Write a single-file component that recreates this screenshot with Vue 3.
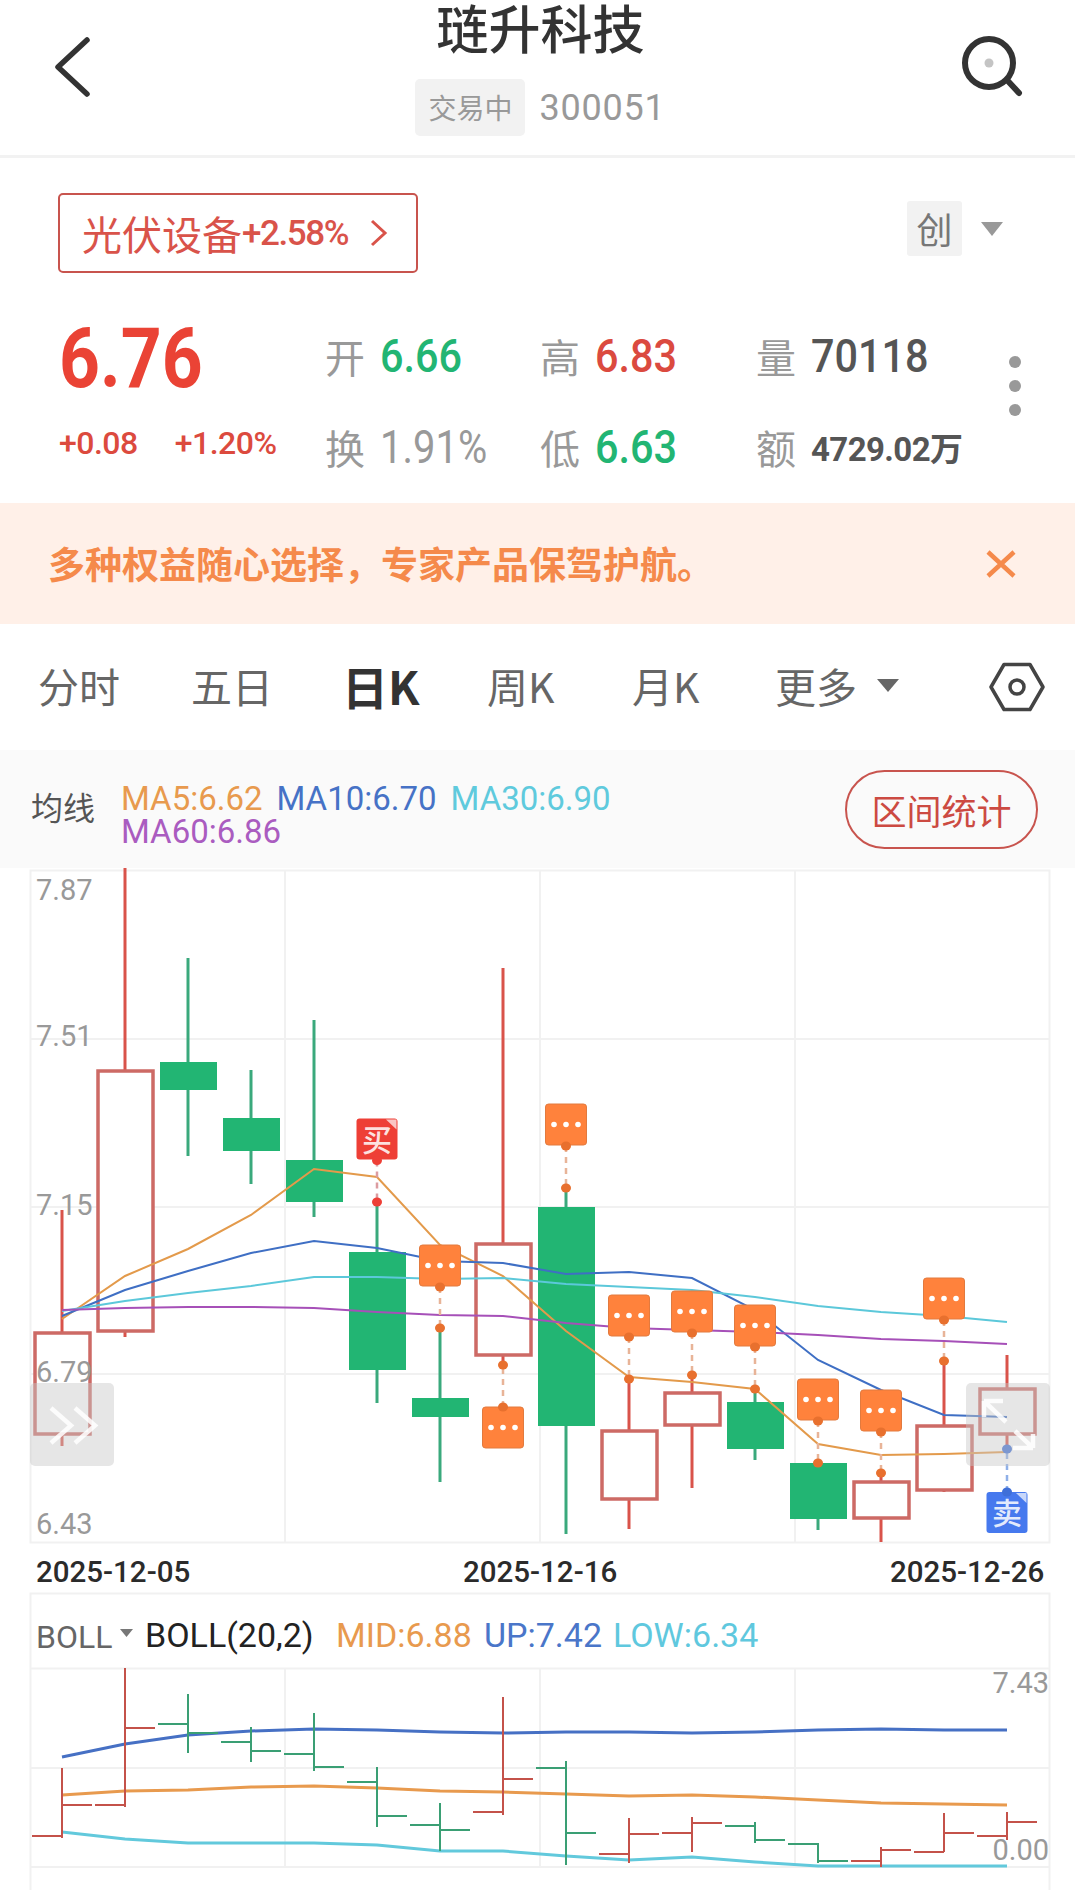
<script setup>
// Daily candles in chart pixels: wick top, body top, body bottom, wick bottom
const STEP = 63
const xAt = (i) => 62 + i * STEP
const candles = [
  ['up', 1210, 1333, 1434, 1446],
  ['up', 868, 1071, 1331, 1337],
  ['down', 958, 1063, 1089, 1156],
  ['down', 1070, 1119, 1150, 1184],
  ['down', 1020, 1161, 1201, 1217],
  ['down', 1205, 1253, 1369, 1403],
  ['down', 1330, 1399, 1416, 1482],
  ['up', 968, 1244, 1355, 1365],
  ['down', 1191, 1208, 1425, 1534],
  ['up', 1379, 1431, 1499, 1529],
  ['up', 1374, 1393, 1425, 1488],
  ['down', 1389, 1403, 1448, 1460],
  ['down', 1463, 1464, 1518, 1530],
  ['up', 1473, 1482, 1518, 1542],
  ['up', 1361, 1426, 1490, 1492],
  ['up', 1355, 1389, 1434, 1448],
].map(([dir, high, top, bottom, low], i) => ({ dir, high, top, bottom, low, x: xAt(i) }))

const toPoints = (ys) => ys.map((y, i) => `${xAt(i)},${y}`).join(' ')

const maLines = [
  { color: '#e39a4b', points: toPoints([1319, 1276, 1249, 1215, 1169, 1177, 1245, 1276, 1331, 1377, 1382, 1389, 1444, 1455, 1454, 1452]) },
  { color: '#3f6fc4', points: toPoints([1316, 1290, 1271, 1253, 1241, 1248, 1261, 1263, 1274, 1272, 1278, 1310, 1360, 1390, 1415, 1417]) },
  { color: '#5cc8da', points: toPoints([1311, 1301, 1293, 1286, 1277, 1277, 1279, 1278, 1284, 1287, 1290, 1297, 1306, 1312, 1316, 1322]) },
  { color: '#a650b8', points: toPoints([1310, 1308, 1307, 1307, 1308, 1312, 1315, 1316, 1323, 1328, 1330, 1332, 1335, 1339, 1341, 1344]) },
]

// Signal flags on the candles: column, box top, and the far end of the dashed stem
const flags = [
  { i: 5, top: 1118.5, end: 1202, kind: 'buy', label: '买' },
  { i: 6, top: 1245, end: 1328, kind: 'note' },
  { i: 7, top: 1407, end: 1365, kind: 'note' },
  { i: 8, top: 1104, end: 1188, kind: 'note' },
  { i: 9, top: 1295, end: 1379, kind: 'note' },
  { i: 10, top: 1291, end: 1375, kind: 'note' },
  { i: 11, top: 1305, end: 1389, kind: 'note' },
  { i: 12, top: 1379, end: 1463, kind: 'note' },
  { i: 13, top: 1390, end: 1473, kind: 'note' },
  { i: 14, top: 1278, end: 1361, kind: 'note' },
  { i: 15, top: 1492, end: 1449, kind: 'sell', label: '卖' },
].map((f) => {
  const below = f.end > f.top
  return { ...f, x: xAt(f.i), start: below ? f.top + 42 : f.top }
})

const bollLines = [
  { color: '#4670c4', points: toPoints([1757, 1744, 1735, 1731, 1729, 1730, 1732, 1733, 1732, 1732, 1733, 1732, 1730, 1729, 1730, 1730]) },
  { color: '#e89a4e', points: toPoints([1795, 1791, 1790, 1787, 1786, 1788, 1791, 1792, 1794, 1796, 1795, 1797, 1800, 1803, 1804, 1805]) },
  { color: '#62c9dc', points: toPoints([1832, 1839, 1843, 1843, 1843, 1845, 1851, 1851, 1856, 1860, 1857, 1862, 1866, 1866, 1866, 1866]) },
]

// OHLC bars for the lower panel: high, low, open tick, close tick
const bars = [
  ['up', 1768, 1838, 1836, 1805],
  ['up', 1668, 1807, 1805, 1728],
  ['down', 1694, 1753, 1724, 1733],
  ['down', 1727, 1762, 1742, 1751],
  ['down', 1713, 1771, 1754, 1767],
  ['down', 1767, 1827, 1782, 1816],
  ['down', 1803, 1851, 1825, 1830],
  ['up', 1697, 1815, 1812, 1779],
  ['down', 1761, 1865, 1768, 1833],
  ['up', 1818, 1863, 1854, 1834],
  ['up', 1817, 1852, 1833, 1823],
  ['down', 1822, 1843, 1826, 1840],
  ['down', 1843, 1863, 1844, 1861],
  ['up', 1847, 1867, 1861, 1850],
  ['up', 1813, 1852, 1852, 1833],
  ['up', 1812, 1840, 1836, 1822],
].map(([dir, high, low, open, close], i) => ({ dir, high, low, open, close, x: xAt(i) }))

const priceLabels = [
  { text: '7.87', y: 900 },
  { text: '7.51', y: 1046 },
  { text: '7.15', y: 1215 },
  { text: '6.79', y: 1382 },
  { text: '6.43', y: 1534 },
]
const gridX = [285, 540, 795]
const gridY = [1039, 1207, 1374]
const tabs = [
  { text: '分时' },
  { text: '五日' },
  { text: '日K', active: true },
  { text: '周K' },
  { text: '月K' },
]
const maLegend = [
  { text: 'MA5:6.62', cls: 'c-orange' },
  { text: 'MA10:6.70', cls: 'c-blue' },
  { text: 'MA30:6.90', cls: 'c-cyan' },
  { text: 'MA60:6.86', cls: 'c-purple' },
]
</script>

<template>
  <div class="page">
    <header class="top">
      <svg class="back" width="40" height="64" viewBox="0 0 40 64">
        <polyline points="35,5 6,32 35,59" />
      </svg>
      <div class="head">
        <div class="title">琏升科技</div>
        <div class="status">
          <span class="state">交易中</span>
          <span class="code">300051</span>
        </div>
      </div>
      <svg class="find" width="64" height="64" viewBox="0 0 64 64">
        <circle cx="29" cy="28" r="24" />
        <line x1="47" y1="45" x2="59" y2="58" />
        <circle class="pupil" cx="29" cy="28" r="4.5" />
      </svg>
    </header>

    <section class="sector-row">
      <div class="sector">
        <span class="sector-name">光伏设备</span><span class="sector-rate">+2.58%</span>
        <svg width="18" height="28" viewBox="0 0 18 28"><polyline points="2,2 15,14 2,26" /></svg>
      </div>
      <div class="board">
        <span class="board-tag">创</span>
        <i class="tri tri-board"></i>
      </div>
    </section>

    <section class="quote">
      <div class="price">
        <div class="last"><span>6.76</span></div>
        <div class="change"><span>+0.08</span><span>+1.20%</span></div>
      </div>
      <div class="cells">
        <div class="cell"><em>开</em><b class="down">6.66</b></div>
        <div class="cell"><em>高</em><b class="up">6.83</b></div>
        <div class="cell"><em>量</em><b class="dark">70118</b></div>
        <div class="cell"><em>换</em><b class="plain">1.91%</b></div>
        <div class="cell"><em>低</em><b class="down">6.63</b></div>
        <div class="cell"><em>额</em><b class="dark small">4729.02万</b></div>
      </div>
      <div class="more"><i></i><i></i><i></i></div>
    </section>

    <div class="banner">
      <span>多种权益随心选择，专家产品保驾护航。</span>
      <svg width="30" height="28" viewBox="0 0 30 28"><path d="M2 2 28 26M28 2 2 26" /></svg>
    </div>

    <nav class="tabs">
      <span v-for="t in tabs" :key="t.text" class="tab" :class="{ active: t.active }">{{ t.text }}</span>
      <span class="tab tab-more">更多<i class="tri tri-tab"></i></span>
      <svg class="hex" width="56" height="50" viewBox="0 0 56 50">
        <polygon points="15,2.5 41,2.5 54,25 41,47.5 15,47.5 2,25" />
        <circle cx="28" cy="25" r="7" />
      </svg>
    </nav>

    <div class="ma-strip">
      <span class="ma-title">均线</span>
      <div class="ma-legend">
        <span v-for="m in maLegend" :key="m.text" :class="m.cls">{{ m.text }}</span>
      </div>
      <span class="range-btn">区间统计</span>
    </div>

    <svg class="chart" width="1075" height="1022" viewBox="0 868 1075 1022">
      <!-- price panel grid -->
      <g class="grid">
        <rect x="30.5" y="870.5" width="1019" height="672" />
        <line v-for="x in gridX" :key="'v' + x" :x1="x" y1="870" :x2="x" y2="1542" />
        <line v-for="y in gridY" :key="'h' + y" x1="30" :y1="y" x2="1050" :y2="y" />
      </g>

      <g v-for="c in candles" :key="'c' + c.x" :class="c.dir === 'up' ? 'candle-up' : 'candle-down'">
        <line class="wick" :x1="c.x" :y1="c.high" :x2="c.x" :y2="c.top" />
        <line class="wick" :x1="c.x" :y1="c.bottom" :x2="c.x" :y2="c.low" />
        <rect class="body" :x="c.x - 27" :y="c.top" width="55" :height="c.bottom - c.top" />
      </g>

      <polyline v-for="l in maLines" :key="l.color" class="ma" :points="l.points" :stroke="l.color" />

      <g v-for="f in flags" :key="'f' + f.i" :class="'flag-' + f.kind">
        <line class="stem" :x1="f.x" :y1="f.start" :x2="f.x" :y2="f.end" />
        <rect class="flag-box" :x="f.x - 20.5" :y="f.top" width="41" height="41" rx="3" />
        <ellipse class="knot" :cx="f.x" :cy="f.start" rx="5" ry="4.5" />
        <ellipse class="knot" :cx="f.x" :cy="f.end" rx="5" ry="4.5" />
        <template v-if="f.kind === 'note'">
          <circle v-for="d in [-12, 0, 12]" :key="d" class="pip" :cx="f.x + d" :cy="f.top + 20.5" r="2.8" />
        </template>
        <template v-else>
          <text class="flag-text" :x="f.x" :y="f.top + 32">{{ f.label }}</text>
          <polygon class="fold" :points="`${f.x + 9},${f.top + 1} ${f.x + 19.5},${f.top + 1} ${f.x + 19.5},${f.top + 11}`" />
        </template>
      </g>

      <text v-for="p in priceLabels" :key="p.text" class="axis" x="36" :y="p.y">{{ p.text }}</text>

      <!-- pan and zoom handles over the plot -->
      <rect class="handle" x="30" y="1383" width="84" height="83" rx="5" />
      <polyline class="handle-mark" points="51,1408 71,1425.5 51,1443" />
      <polyline class="handle-mark" points="75,1408 95,1425.5 75,1443" />
      <rect class="handle" x="966" y="1383" width="84" height="83" rx="5" />
      <path class="handle-mark" d="M984 1401H1003M984 1401V1417M984 1401 1006 1422M1033 1448H1013M1033 1448V1434M1033 1448 1015 1431" />

      <text class="date" x="36" y="1582">2025-12-05</text>
      <text class="date" x="463" y="1582">2025-12-16</text>
      <text class="date" x="890" y="1582">2025-12-26</text>

      <!-- indicator panel -->
      <g class="grid">
        <path d="M30.5 1890V1593.5H1049.5V1890" />
        <line x1="30" y1="1668.5" x2="1050" y2="1668.5" />
        <line x1="30" y1="1768" x2="1050" y2="1768" />
        <line x1="30" y1="1867" x2="1050" y2="1867" />
        <line v-for="x in gridX" :key="'b' + x" :x1="x" y1="1668" :x2="x" y2="1867" />
      </g>

      <text class="legend legend-pick" x="36" y="1648">BOLL</text>
      <polygon points="120,1629 133,1629 126.5,1637" fill="#777" />
      <text class="legend" y="1647">
        <tspan x="145" fill="#222">BOLL(20,2)</tspan>
        <tspan x="336" fill="#e89a4e">MID:6.88</tspan>
        <tspan x="484" fill="#4a76c9">UP:7.42</tspan>
        <tspan x="613" fill="#5fc8de">LOW:6.34</tspan>
      </text>

      <polyline v-for="l in bollLines" :key="l.color" class="boll" :points="l.points" :stroke="l.color" />

      <g v-for="b in bars" :key="'o' + b.x" :class="b.dir === 'up' ? 'bar-up' : 'bar-down'">
        <line :x1="b.x" :y1="b.high" :x2="b.x" :y2="b.low" />
        <line :x1="b.x - 30" :y1="b.open" :x2="b.x" :y2="b.open" />
        <line :x1="b.x" :y1="b.close" :x2="b.x + 30" :y2="b.close" />
      </g>

      <text class="axis" x="1049" y="1693" text-anchor="end">7.43</text>
      <text class="axis" x="1049" y="1860" text-anchor="end">0.00</text>
    </svg>
  </div>
</template>

<style scoped>
.page {
  width: 1075px;
  height: 1890px;
  overflow: hidden;
  background: #fff;
  font-family: Roboto, "Noto Sans CJK SC", sans-serif;
  color: #333;
}

/* header */
.top {
  height: 155px;
  border-bottom: 3px solid #f2f2f2;
  display: grid;
  grid-template-columns: 1fr auto 1fr;
  align-items: start;
}
.back {
  margin: 35px 0 0 52px;
}
.back polyline {
  fill: none;
  stroke: #333;
  stroke-width: 5.5;
  stroke-linecap: round;
  stroke-linejoin: round;
}
.find {
  justify-self: end;
  margin: 35px 51px 0 0;
}
.find circle,
.find line {
  fill: none;
  stroke: #333;
  stroke-width: 6;
  stroke-linecap: round;
}
.find .pupil {
  fill: #c4c4c4;
  stroke: none;
}
.head {
  margin-left: 6px;
  display: flex;
  flex-direction: column;
  align-items: center;
}
.title {
  font: 500 52px/54px "Noto Sans CJK SC", sans-serif;
  color: #333;
}
.status {
  margin-top: 25px;
  display: flex;
  align-items: center;
  gap: 14px;
}
.state {
  width: 110px;
  height: 57px;
  background: #f2f2f2;
  border-radius: 5px;
  font: 28px/57px "Noto Sans CJK SC", sans-serif;
  color: #999;
  text-align: center;
}
.code {
  font-size: 36px;
  letter-spacing: 0.8px;
  color: #999;
}

/* sector row */
.sector-row {
  padding: 35px 72px 0 58px;
  display: flex;
  justify-content: space-between;
  align-items: flex-start;
}
.sector {
  width: 360px;
  height: 80px;
  box-sizing: border-box;
  border: 2px solid #c8544e;
  border-radius: 5px;
  display: flex;
  align-items: center;
  padding-left: 22px;
  color: #d9534a;
}
.sector-name {
  font: 40px/1 "Noto Sans CJK SC", sans-serif;
}
.sector-rate {
  font-size: 35px;
  font-weight: 500;
  letter-spacing: -1.4px;
}
.sector svg {
  margin-left: 22px;
}
.sector polyline {
  fill: none;
  stroke: #d9534a;
  stroke-width: 3;
}
.board {
  margin-top: 8px;
  display: flex;
  align-items: center;
  gap: 19px;
}
.board-tag {
  width: 55px;
  height: 55px;
  background: #f2f2f2;
  border-radius: 3px;
  font: 36px/55px "Noto Sans CJK SC", sans-serif;
  color: #777;
  text-align: center;
}
.tri {
  display: block;
  width: 0;
  height: 0;
  border-style: solid;
  border-color: #999 transparent transparent;
}
.tri-board {
  border-width: 14px 11px 0;
}

/* quote block */
.quote {
  margin-top: 37px;
  height: 193px;
  padding-left: 59px;
  display: flex;
  position: relative;
}
.price {
  width: 266px;
}
.last {
  font-size: 84px;
  font-weight: 700;
  line-height: 98px;
  color: #ea4335;
}
.last span {
  display: inline-block;
  transform: scaleX(0.85);
  transform-origin: left;
}
.change {
  margin-top: 15px;
  display: flex;
  gap: 37px;
  font-size: 32px;
  font-weight: 500;
  line-height: 40px;
  color: #dc4a3e;
  letter-spacing: -0.5px;
}
.cells {
  display: grid;
  grid-template-columns: 215px 216px 260px;
  grid-auto-rows: 91px;
}
.cell {
  display: flex;
  align-items: center;
  gap: 15px;
}
.cell em {
  font: 40px/1 "Noto Sans CJK SC", sans-serif;
  color: #999;
}
.cell b {
  display: inline-block;
  font-size: 47px;
  font-weight: 500;
  transform: scaleX(0.88);
  transform-origin: left;
}
.cell b.small {
  font-size: 33px;
  font-weight: 700;
  transform: none;
  letter-spacing: -0.6px;
}
.cell b.plain {
  font-weight: 400;
  color: #999;
  transform: scaleX(0.85);
}
.up {
  color: #db4a3f;
}
.down {
  color: #22b573;
}
.dark {
  color: #555;
}
.more {
  position: absolute;
  top: 46px;
  left: 1009px;
  display: flex;
  flex-direction: column;
  gap: 12px;
}
.more i {
  display: block;
  width: 12px;
  height: 12px;
  border-radius: 50%;
  background: #999;
}

/* promo banner */
.banner {
  margin-top: 0;
  height: 121px;
  padding: 0 59px 0 48px;
  background: #fff0e8;
  display: flex;
  align-items: center;
  justify-content: space-between;
  font: 700 37px/1 "Noto Sans CJK SC", sans-serif;
  color: #f58a4b;
}
.banner svg path {
  fill: none;
  stroke: #f58a4b;
  stroke-width: 4.5;
}

/* period tabs */
.tabs {
  height: 126px;
  position: relative;
  display: grid;
  grid-template-columns: 153px 151px 145px 145px 143px 1fr;
  padding-left: 38px;
  padding-bottom: 4px;
  box-sizing: border-box;
  align-items: center;
}
.tab {
  font: 41px/1 "Noto Sans CJK SC", sans-serif;
  color: #666;
  display: flex;
  align-items: center;
}
.tab.active {
  font-size: 46px;
  font-weight: 700;
  color: #333;
}
.tri-tab {
  margin-left: 20px;
  border-width: 13px 11px 0;
  border-top-color: #666;
}
.hex {
  position: absolute;
  left: 989px;
  top: 38px;
}
.hex polygon,
.hex circle {
  fill: none;
  stroke: #444;
  stroke-width: 3.5;
  stroke-linejoin: round;
}

/* moving average legend */
.ma-strip {
  height: 118px;
  background: #fafafa;
  display: flex;
  align-items: center;
  padding-left: 31px;
}
.ma-title {
  width: 90px;
  margin-bottom: 6px;
  font: 32px/1 "Noto Sans CJK SC", sans-serif;
  color: #555;
}
.ma-legend {
  width: 500px;
  margin-top: 11px;
  display: flex;
  flex-wrap: wrap;
  column-gap: 14px;
  font-size: 33px;
  line-height: 33px;
}
.c-orange {
  color: #e89a4e;
}
.c-blue {
  color: #4672c6;
}
.c-cyan {
  color: #5fcadd;
}
.c-purple {
  color: #aa5cc0;
}
.range-btn {
  margin-left: 224px;
  width: 193px;
  height: 79px;
  box-sizing: border-box;
  border: 2px solid #c8544e;
  border-radius: 40px;
  font: 35px/75px "Noto Sans CJK SC", sans-serif;
  color: #cc4a42;
  text-align: center;
}

/* chart drawing */
.chart {
  display: block;
}
.grid rect,
.grid path,
.grid line {
  fill: none;
  stroke: #f1f1f1;
  stroke-width: 2;
}
.wick {
  stroke-width: 3;
}
.candle-up .wick {
  stroke: #d9534a;
}
.candle-up .body {
  fill: #fff;
  stroke: #cd6a65;
  stroke-width: 3.5;
}
.candle-down .wick {
  stroke: #3aa97c;
}
.candle-down .body {
  fill: #22b573;
  stroke: #22b573;
  stroke-width: 2;
}
.ma {
  fill: none;
  stroke-width: 2;
}
.stem {
  stroke-width: 2.5;
  stroke-dasharray: 6 5;
  stroke: #e8b498;
}
.flag-note .flag-box {
  fill: #ff823c;
  stroke: #e27a3e;
}
.flag-note .knot {
  fill: #e8702e;
}
.pip {
  fill: #fff;
}
.flag-buy .flag-box,
.flag-buy .knot {
  fill: #ee3f36;
}
.flag-buy .stem {
  stroke: #dc9ca0;
}
.flag-sell .flag-box {
  fill: #4679ee;
}
.flag-sell .knot {
  fill: #3f6fd8;
}
.flag-sell .stem {
  stroke: #8fb0e8;
}
.flag-text {
  font: 500 30px "Noto Sans CJK SC", sans-serif;
  fill: #fff;
  fill-opacity: 0.85;
  text-anchor: middle;
}
.fold {
  fill: #fff;
  opacity: 0.7;
}
.axis {
  font-size: 29px;
  fill: #999;
}
.date {
  font-size: 29.5px;
  font-weight: 500;
  fill: #2b2b2b;
}
.handle {
  fill: #c8c8c8;
  opacity: 0.45;
}
.handle-mark {
  fill: none;
  stroke: #fff;
  stroke-width: 4.5;
  opacity: 0.85;
}
.legend {
  font-size: 34px;
}
.legend-pick {
  font-size: 32px;
  fill: #666;
}
.boll {
  fill: none;
  stroke-width: 3;
}
.bar-up line {
  stroke: #c4524a;
  stroke-width: 2;
}
.bar-down line {
  stroke: #3a9f74;
  stroke-width: 2;
}
</style>
